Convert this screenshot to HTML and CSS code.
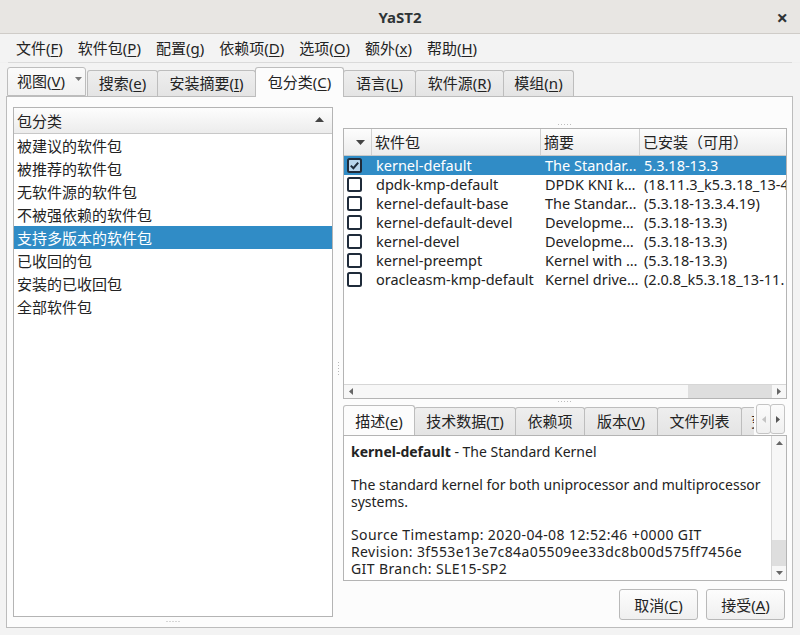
FILE: index.html
```html
<!DOCTYPE html>
<html>
<head>
<meta charset="utf-8">
<title>YaST2</title>
<link rel="stylesheet" href="styles.css">
</head>
<body>
<div class="window">
  <div class="titlebar">
    <span class="title">YaST2</span>
    <span class="close">×</span>
  </div>
  <div class="menubar">
    <span class="menu">文件(<u>F</u>)</span>
    <span class="menu">软件包(<u>P</u>)</span>
    <span class="menu">配置(<u>g</u>)</span>
    <span class="menu">依赖项(<u>D</u>)</span>
    <span class="menu">选项(<u>O</u>)</span>
    <span class="menu">额外(<u>x</u>)</span>
    <span class="menu">帮助(<u>H</u>)</span>
  </div>
  <div class="menusep"></div>
  <div class="content">
    <div class="tabs">
      <div class="tab combo">视图(<u>V</u>)<span class="drop"><svg width="7" height="4" viewBox="0 0 7 4"><path d="M0 0H7L3.5 4Z" fill="#777"/></svg></span></div>
      <div class="tab t-search">搜索(<u>e</u>)</div>
      <div class="tab t-summary">安装摘要(<u>I</u>)</div>
      <div class="tab t-groups active">包分类(<u>C</u>)</div>
      <div class="tab t-lang">语言(<u>L</u>)</div>
      <div class="tab t-repo">软件源(<u>R</u>)</div>
      <div class="tab t-mod">模组(<u>n</u>)</div>
    </div>
    <div class="pane">
      <div class="left">
        <div class="listbox">
          <div class="lhead"><span>包分类</span><svg class="sortup" width="9" height="5" viewBox="0 0 9 5"><path d="M0 5H9L4.5 0Z" fill="#444"/></svg></div>
          <div class="lrow">被建议的软件包</div>
          <div class="lrow">被推荐的软件包</div>
          <div class="lrow">无软件源的软件包</div>
          <div class="lrow">不被强依赖的软件包</div>
          <div class="lrow sel">支持多版本的软件包</div>
          <div class="lrow">已收回的包</div>
          <div class="lrow">安装的已收回包</div>
          <div class="lrow">全部软件包</div>
        </div>
        <div class="bgrip"></div>
      </div>
      <div class="vsplit"><div class="vdots"></div></div>
      <div class="right">
        <div class="topgrip"><div class="hdots"></div></div>
        <div class="table">
          <div class="thead">
            <div class="c0 th"><svg width="9" height="5" viewBox="0 0 9 5"><path d="M0 0H9L4.5 5Z" fill="#444"/></svg></div>
            <div class="c1 th">软件包</div>
            <div class="c2 th">摘要</div>
            <div class="c3 th">已安装（可用）</div>
          </div>
          <div class="tbody">
            <div class="tr sel">
              <div class="c0"><svg class="cb" width="15" height="15" viewBox="0 0 15 15"><rect x="1" y="1" width="13" height="13" rx="1.5" fill="#b9d5ec" stroke="#1f2b3a" stroke-width="2"/><path d="M3.8 7.6L6.4 10.2L11.2 4.6" fill="none" stroke="#1f2b3a" stroke-width="2"/></svg></div>
              <div class="c1">kernel-default</div>
              <div class="c2">The Standar…</div>
              <div class="c3">5.3.18-13.3</div>
            </div>
            <div class="tr">
              <div class="c0"><svg class="cb" width="15" height="15" viewBox="0 0 15 15"><rect x="1" y="1" width="13" height="13" rx="1.5" fill="#fff" stroke="#1f2b3a" stroke-width="2"/></svg></div>
              <div class="c1">dpdk-kmp-default</div>
              <div class="c2">DPDK KNI k…</div>
              <div class="c3">(18.11.3_k5.3.18_13-4</div>
            </div>
            <div class="tr">
              <div class="c0"><svg class="cb" width="15" height="15" viewBox="0 0 15 15"><rect x="1" y="1" width="13" height="13" rx="1.5" fill="#fff" stroke="#1f2b3a" stroke-width="2"/></svg></div>
              <div class="c1">kernel-default-base</div>
              <div class="c2">The Standar…</div>
              <div class="c3">(5.3.18-13.3.4.19)</div>
            </div>
            <div class="tr">
              <div class="c0"><svg class="cb" width="15" height="15" viewBox="0 0 15 15"><rect x="1" y="1" width="13" height="13" rx="1.5" fill="#fff" stroke="#1f2b3a" stroke-width="2"/></svg></div>
              <div class="c1">kernel-default-devel</div>
              <div class="c2">Developme…</div>
              <div class="c3">(5.3.18-13.3)</div>
            </div>
            <div class="tr">
              <div class="c0"><svg class="cb" width="15" height="15" viewBox="0 0 15 15"><rect x="1" y="1" width="13" height="13" rx="1.5" fill="#fff" stroke="#1f2b3a" stroke-width="2"/></svg></div>
              <div class="c1">kernel-devel</div>
              <div class="c2">Developme…</div>
              <div class="c3">(5.3.18-13.3)</div>
            </div>
            <div class="tr">
              <div class="c0"><svg class="cb" width="15" height="15" viewBox="0 0 15 15"><rect x="1" y="1" width="13" height="13" rx="1.5" fill="#fff" stroke="#1f2b3a" stroke-width="2"/></svg></div>
              <div class="c1">kernel-preempt</div>
              <div class="c2">Kernel with …</div>
              <div class="c3">(5.3.18-13.3)</div>
            </div>
            <div class="tr">
              <div class="c0"><svg class="cb" width="15" height="15" viewBox="0 0 15 15"><rect x="1" y="1" width="13" height="13" rx="1.5" fill="#fff" stroke="#1f2b3a" stroke-width="2"/></svg></div>
              <div class="c1">oracleasm-kmp-default</div>
              <div class="c2">Kernel drive…</div>
              <div class="c3">(2.0.8_k5.3.18_13-11.</div>
            </div>
          </div>
          <div class="hscroll">
            <div class="sarrow"><svg width="4" height="7" viewBox="0 0 4 7"><path d="M4 0V7L0 3.5Z" fill="#666"/></svg></div>
            <div class="strack"><div class="sthumb"></div></div>
            <div class="sarrow"><svg width="4" height="7" viewBox="0 0 4 7"><path d="M0 0V7L4 3.5Z" fill="#666"/></svg></div>
          </div>
        </div>
        <div class="midgrip"><div class="hdots"></div></div>
        <div class="dtabbar">
          <div class="dtabs">
            <div class="dtab d-desc active">描述(<u>e</u>)</div>
            <div class="dtab d-tech">技术数据(<u>T</u>)</div>
            <div class="dtab d-deps">依赖项</div>
            <div class="dtab d-ver">版本(<u>V</u>)</div>
            <div class="dtab d-files">文件列表</div>
            <div class="dtab d-more">变更日志</div>
          </div>
          <div class="tabscroll">
            <div class="tsb"><svg width="4" height="7" viewBox="0 0 4 7"><path d="M4 0V7L0 3.5Z" fill="#c4c4c4"/></svg></div>
            <div class="tsb"><svg width="4" height="7" viewBox="0 0 4 7"><path d="M0 0V7L4 3.5Z" fill="#555"/></svg></div>
          </div>
        </div>
        <div class="desc">
          <div class="dtext">
            <p><b>kernel-default</b> - The Standard Kernel</p>
            <p>The standard kernel for both uniprocessor and multiprocessor systems.</p>
            <p class="meta">Source Timestamp: 2020-04-08 12:52:46 +0000 GIT<br>Revision: 3f553e13e7c84a05509ee33dc8b00d575ff7456e<br>GIT Branch: SLE15-SP2</p>
          </div>
          <div class="vscroll">
            <div class="varrow"><svg width="7" height="4" viewBox="0 0 7 4"><path d="M0 4H7L3.5 0Z" fill="#666"/></svg></div>
            <div class="vtrack"><div class="vthumb"></div></div>
            <div class="varrow"><svg width="7" height="4" viewBox="0 0 7 4"><path d="M0 0H7L3.5 4Z" fill="#666"/></svg></div>
          </div>
        </div>
        <div class="buttons">
          <button class="btn">取消(<u>C</u>)</button>
          <button class="btn">接受(<u>A</u>)</button>
        </div>
      </div>
    </div>
  </div>
</div>
</body>
</html>
```
FILE: styles.css
```css
* { box-sizing: border-box; }
html, body { margin: 0; padding: 0; }
body {
  width: 800px;
  height: 635px;
  overflow: hidden;
  background: #f0f0f0;
  font-family: "Noto Sans", "Noto Sans CJK SC", sans-serif;
  font-size: 15px;
  color: #232323;
}
u { text-decoration: underline; text-underline-offset: 2px; text-decoration-thickness: 1px; }
.window { width: 800px; height: 635px; display: flex; flex-direction: column; }

.titlebar {
  height: 34px;
  flex: none;
  background: #e8e6e3;
  border-bottom: 1px solid #cfccc8;
  position: relative;
  display: flex;
  align-items: center;
  justify-content: center;
}
.title { font-weight: bold; font-size: 15px; color: #2e3436; }
.close {
  position: absolute;
  right: 12px;
  top: 4px;
  font-size: 20px;
  font-weight: bold;
  color: #2e3436;
}

.menubar {
  height: 28px;
  flex: none;
  display: flex;
  align-items: center;
  padding-left: 8.5px;
  background: #f3f3f3;
}
.menu { padding: 0 7.5px; line-height: 28px; white-space: nowrap; }
.menusep { height: 1px; margin: 0 8px; background: #dadada; flex: none; }
.content { flex: 1; display: flex; flex-direction: column; padding: 4px 7px 7px 6px; background: #f3f3f3; }

.tabs { display: flex; align-items: flex-end; height: 29px; padding-left: 1px; flex: none; position: relative; z-index: 2; }
.tab {
  height: 26px;
  line-height: 24px;
  padding: 0;
  text-align: center;
  border: 1px solid #bdbdbd;
  border-bottom: none;
  border-radius: 3px 3px 0 0;
  background: linear-gradient(#eeeeee, #e4e4e4);
  margin-right: -1px;
  white-space: nowrap;
}
.t-search { width: 71px; }
.t-summary { width: 99px; }
.t-groups { width: 89px; }
.t-lang { width: 73px; }
.t-repo { width: 89px; }
.t-mod { width: 71px; }
.tab.combo {
  height: 29px;
  line-height: 27px;
  width: 79px;
  padding: 0 0 0 9px;
  text-align: left;
  background: linear-gradient(#fbfbfb, #f1f1f1);
  border-bottom: 1px solid #bdbdbd;
  display: flex;
  margin-right: 1px;
}
.drop { margin-left: 10px; display: flex; align-items: center; height: 22px; }
.tab.active {
  height: 30px;
  line-height: 28px;
  background: #fcfcfc;
  margin-bottom: -1px;
  position: relative;
  z-index: 1;
}
.pane {
  flex: 1;
  border: 1px solid #bcbcbc;
  background: #fcfcfc;
  display: flex;
  padding: 10px 5px 0 6px;
}

.left { width: 320px; flex: none; display: flex; flex-direction: column; }
.listbox { flex: none; height: 510px; border: 1px solid #b4b4b4; background: #fff; }
.lhead {
  height: 26px;
  border-bottom: 1px solid #c8c8c8;
  background: linear-gradient(#fdfdfd, #ececec);
  display: flex;
  align-items: center;
  justify-content: space-between;
  padding: 0 8px 0 3px;
}
.sortup { margin-top: -2px; }
.lrow { height: 23px; line-height: 24px; padding-left: 3px; white-space: nowrap; }
.lrow.sel { background: #308cc6; color: #fff; }
.bgrip {
  height: 9px;
  background: radial-gradient(circle, #b0b0b0 0.6px, transparent 0.9px) center / 3px 3px repeat-x;
  width: 16px;
  margin: 0 auto;
}

.vsplit { width: 10px; flex: none; display: flex; align-items: center; justify-content: center; }
.vdots { width: 3px; height: 16px; margin-top: 4px; background: radial-gradient(circle, #b8b8b8 0.6px, transparent 0.9px) 0 0 / 3px 3px repeat-y; }

.right { flex: 1; display: flex; flex-direction: column; min-width: 0; }
.topgrip { height: 21px; display: flex; align-items: flex-end; justify-content: center; padding-bottom: 2px; flex: none; }
.midgrip { height: 5px; display: flex; align-items: center; justify-content: center; flex: none; }
.hdots { width: 16px; height: 3px; background: radial-gradient(circle, #bdbdbd 0.6px, transparent 0.9px) 0 0 / 3px 3px repeat-x; }

.table {
  height: 271px;
  flex: none;
  border: 1px solid #b4b4b4;
  background: #fff;
  display: flex;
  flex-direction: column;
  overflow: hidden;
}
.thead {
  height: 27px;
  flex: none;
  display: flex;
  background: linear-gradient(#fdfdfd, #ececec);
  border-bottom: 1px solid #c8c8c8;
}
.th { line-height: 26px; border-right: 1px solid #d0d0d0; padding-left: 3px; }
.thead .c0 { display: flex; align-items: center; justify-content: flex-end; padding-right: 6px; }
.c0 { width: 28px; flex: none; }
.c1 { width: 169px; flex: none; }
.c2 { width: 99px; flex: none; }
.c3 { flex: 1; white-space: nowrap; overflow: hidden; }
.thead .c3 { border-right: none; }
.tbody { flex: 1; font-size: 14.5px; }
.tr { height: 19px; line-height: 19px; display: flex; white-space: nowrap; }
.tr .c1, .tr .c2, .tr .c3 { padding-left: 4px; overflow: hidden; }
.tr .c0 { display: flex; align-items: center; padding-left: 3px; }
.tr.sel { background: #308cc6; color: #fff; }
.hscroll { height: 14px; flex: none; display: flex; border-top: 1px solid #d6d6d6; background: #f7f7f7; }
.sarrow { width: 14px; display: flex; align-items: center; justify-content: center; }
.strack { flex: 1; position: relative; }
.sthumb { position: absolute; right: 0; top: 0; bottom: 0; width: 84px; background: #dedede; }

.dtabbar { height: 31px; flex: none; display: flex; align-items: flex-end; position: relative; z-index: 2; }
.dtabs { display: flex; align-items: flex-end; width: 411px; overflow: hidden; height: 31px; }
.dtab {
  height: 28px;
  line-height: 26px;
  padding: 0;
  text-align: center;
  border: 1px solid #bdbdbd;
  border-bottom: none;
  border-radius: 3px 3px 0 0;
  background: linear-gradient(#eeeeee, #e4e4e4);
  margin-right: -1px;
  white-space: nowrap;
  flex: none;
}
.d-desc { width: 72px; }
.d-tech { width: 102px; }
.d-deps { width: 70px; }
.d-ver { width: 74px; }
.d-files { width: 85px; }
.d-more { width: 90px; text-align: left; padding-left: 9px; }
.dtab.active { height: 31px; line-height: 30px; background: #fcfcfc; margin-bottom: -1px; position: relative; z-index: 1; }
.tabscroll { display: flex; margin-left: 2px; height: 31px; }
.tsb {
  width: 15px;
  height: 30px;
  border: 1px solid #c4c4c4;
  border-radius: 3px;
  background: linear-gradient(#fbfbfb, #f0f0f0);
  display: flex;
  align-items: center;
  justify-content: center;
  margin-right: -1px;
}

.desc {
  height: 146px;
  flex: none;
  border: 1px solid #b4b4b4;
  background: #fff;
  display: flex;
}
.dtext { flex: 1; padding: 7px 8px 0 7px; font-size: 14px; line-height: 17px; overflow: hidden; }
.dtext p { margin: 0 0 16px; }
.dtext p.meta { letter-spacing: 0.4px; white-space: nowrap; }
.dtext b { font-weight: bold; }
.vscroll { width: 15px; flex: none; display: flex; flex-direction: column; border-left: 1px solid #d6d6d6; background: #f7f7f7; }
.varrow { height: 14px; display: flex; align-items: center; justify-content: center; }
.vtrack { flex: 1; position: relative; }
.vthumb { position: absolute; left: 0; right: 0; bottom: 0; height: 26px; background: #dedede; }

.buttons { display: flex; justify-content: flex-end; gap: 8px; margin-top: 8px; padding-right: 2px; }
.btn {
  font-family: inherit;
  font-size: 15px;
  color: #232323;
  height: 31px;
  padding: 0;
  border: 1px solid #b9b9b9;
  border-radius: 3px;
  background: linear-gradient(#fdfdfd, #efefef);
}
.btn:first-child { width: 79px; }
.btn:last-child { width: 79px; }
```
